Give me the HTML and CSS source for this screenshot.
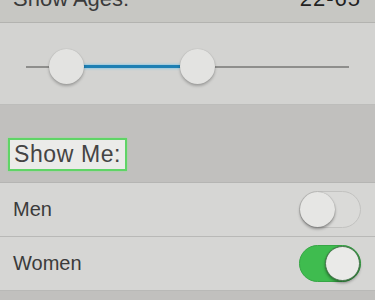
FILE: index.html
```html
<!DOCTYPE html>
<html lang="en">
<head>
    <meta charset="UTF-8">
    <meta name="viewport" content="width=device-width, initial-scale=1">
    <title>Discovery Preferences</title>
    <link rel="stylesheet" href="styles.css">
</head>
<body>
    <div class="ages-row">
        <span class="ages-label">Show Ages:</span>
        <span class="ages-value">22-65</span>
    </div>

    <div class="slider-row">
        <div class="slider-track">
            <div class="slider-fill"></div>
            <div class="slider-thumb thumb-min"></div>
            <div class="slider-thumb thumb-max"></div>
        </div>
    </div>

    <div class="section-header">
        <span class="show-me">Show Me:</span>
    </div>

    <div class="option-row">
        <span class="option-label">Men</span>
        <div class="switch"><div class="switch-knob"></div></div>
    </div>
    <div class="option-row">
        <span class="option-label">Women</span>
        <div class="switch switch-on"><div class="switch-knob"></div></div>
    </div>
</body>
</html>
```

FILE: styles.css
```css
* {
    box-sizing: border-box;
    margin: 0;
    padding: 0;
}

body {
    font-family: "Liberation Sans", Arial, sans-serif;
    background-color: #c1c0be;
    color: #3b3b3b;
    height: 300px;
    overflow: hidden;
}

.ages-row {
    height: 23px;
    overflow: hidden;
    display: flex;
    justify-content: space-between;
    align-items: flex-end;
    padding: 0 14px 0 13px;
    background: #c7c7c3;
    border-bottom: 1px solid #b3b3b0;
}

.ages-label,
.ages-value {
    font-size: 22px;
    line-height: 22px;
    margin-bottom: 12px;
}

.ages-value {
    color: #222;
    letter-spacing: 1px;
}

.slider-row {
    height: 82px;
    background: #d3d3d1;
    padding: 43px 26px 0 26px;
    border-bottom: 1px solid #bdbdbb;
}

.slider-track {
    position: relative;
    height: 2px;
    background: #8e8e8c;
}

.slider-fill {
    position: absolute;
    left: 57px;
    width: 97px;
    top: -1px;
    height: 3px;
    background: #1d7fb3;
    box-shadow: 0 0 3px #5cc2f0;
}

.slider-thumb {
    position: absolute;
    top: -17px;
    width: 35px;
    height: 35px;
    border-radius: 50%;
    background: #e3e3e1;
    box-shadow: 0 2px 3px rgba(0, 0, 0, 0.25), 0 0 1px rgba(0, 0, 0, 0.2);
}

.thumb-min {
    left: 23px;
}

.thumb-max {
    left: 154px;
}

.section-header {
    height: 78px;
    display: flex;
    align-items: flex-end;
    padding: 0 0 11px 8px;
    border-bottom: 1px solid #b5b5b3;
}

.show-me {
    display: inline-block;
    font-size: 23px;
    line-height: 29px;
    letter-spacing: 0.6px;
    padding: 0 4px 0 4px;
    color: #444;
    background: #ebebe9;
    border: 2px solid #5fd466;
    box-shadow: 0 0 2px #8ee08f;
}

.option-row {
    height: 54px;
    display: flex;
    align-items: center;
    justify-content: space-between;
    padding: 0 14px 0 13px;
    background: #d6d6d4;
    border-bottom: 1px solid #b9b9b7;
}

.option-label {
    font-size: 20px;
}

.switch {
    position: relative;
    width: 62px;
    height: 37px;
    border-radius: 19px;
    background: #dadad8;
    border: 1px solid #c2c2c0;
}

.switch-knob {
    position: absolute;
    top: 0;
    left: 0;
    width: 35px;
    height: 35px;
    border-radius: 50%;
    background: #e6e6e4;
    box-shadow: 0 2px 3px rgba(0, 0, 0, 0.35), 0 0 1px rgba(0, 0, 0, 0.3);
}

.switch-on {
    background: #3fbc4f;
    border-color: #36a645;
}

.switch-on .switch-knob {
    left: auto;
    right: 0;
    background: #eaeae8;
    border: 1px solid #4a7a4f;
}
```
